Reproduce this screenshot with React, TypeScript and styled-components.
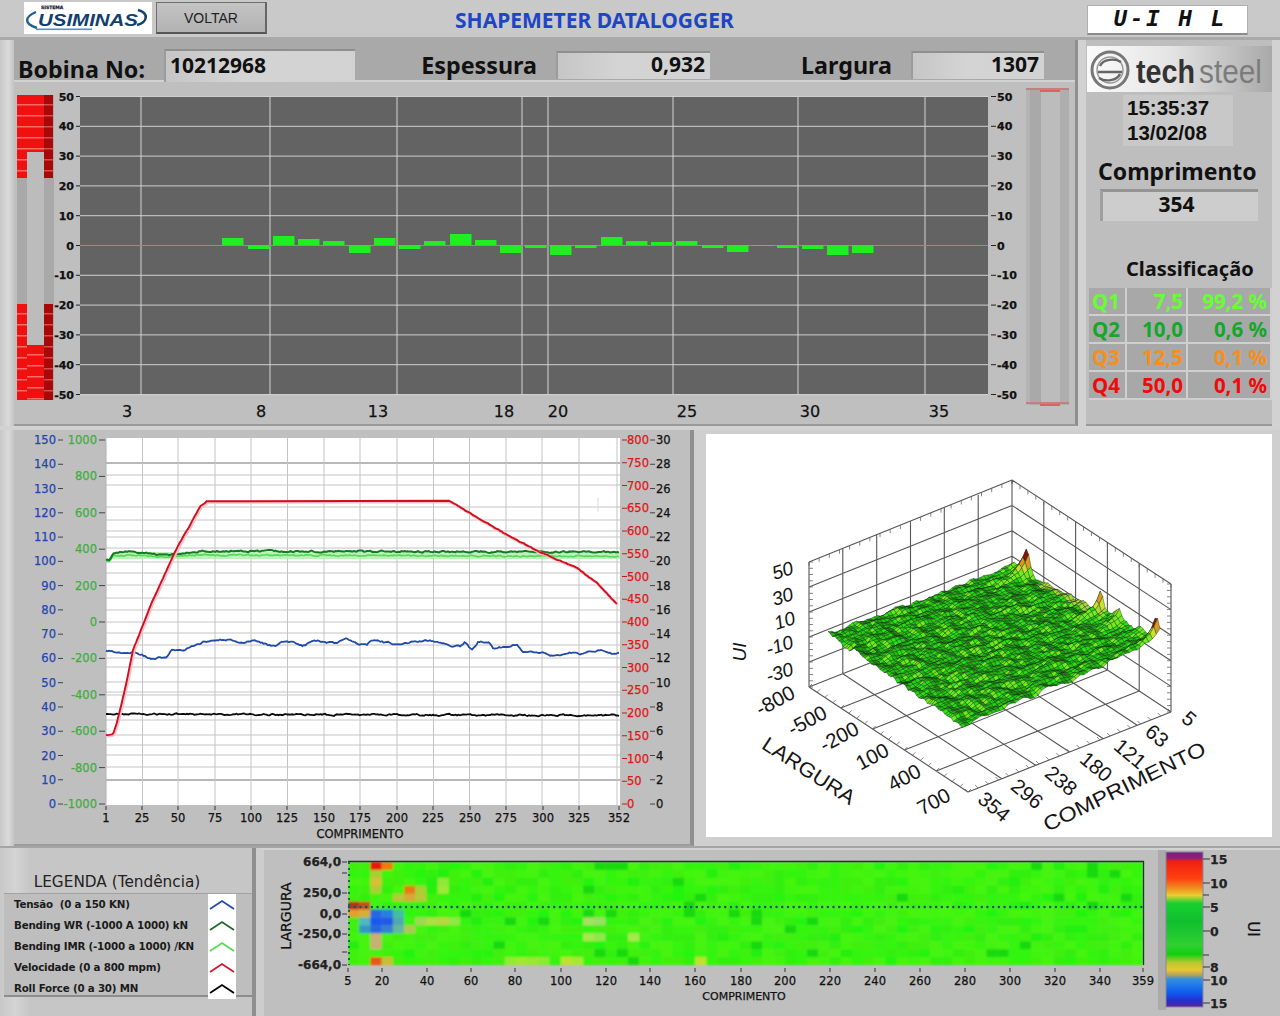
import React from "react";
import styled, { createGlobalStyle } from "styled-components";

const GlobalStyle = createGlobalStyle`
  html, body { margin: 0; padding: 0; background: #c8c8c8; }
  body { font-family: "Noto Sans", "Liberation Sans", sans-serif; }
`;

const TICK_FONT = `"DejaVu Sans", "Liberation Sans", sans-serif`;
const BOLD_FONT = `"Noto Sans", "Liberation Sans", sans-serif`;

/* ---------- deterministic helpers ---------- */
function makeRng(seed: number) {
  let a = seed;
  return () => {
    a |= 0;
    a = (a + 0x6d2b79f5) | 0;
    let t = Math.imul(a ^ (a >>> 15), 1 | a);
    t = (t + Math.imul(t ^ (t >>> 7), 61 | t)) ^ t;
    return ((t ^ (t >>> 14)) >>> 0) / 4294967296;
  };
}
type Pt = [number, number];
function interp(points: Pt[], x: number) {
  for (let i = 1; i < points.length; i++) {
    if (x <= points[i][0]) {
      const [x0, y0] = points[i - 1];
      const [x1, y1] = points[i];
      return y0 + ((y1 - y0) * (x - x0)) / (x1 - x0 || 1);
    }
  }
  return points[points.length - 1][1];
}
function noisyLine(points: Pt[], noise: number, seed: number, step = 1.5) {
  const r = makeRng(seed);
  const start = points[0][0];
  const end = points[points.length - 1][0];
  let d = `M${start} ${points[0][1]}`;
  let drift = 0;
  for (let x = start + step; x <= end; x += step) {
    drift = drift * 0.6 + (r() - 0.5) * noise;
    d += `L${x.toFixed(1)} ${(interp(points, x) + drift).toFixed(1)}`;
  }
  return d;
}

/* ---------- layout ---------- */
const Page = styled.div`
  width: 1280px;
  height: 1016px;
  overflow: hidden;
  background: #c8c8c8;
  display: grid;
  grid-template-rows: 40px 390px 416px 170px;
`;

const HeaderBar = styled.header`
  display: grid;
  grid-template-columns: 128px 111px 812px 161px;
  column-gap: 4px;
  padding: 2px 0 0 24px;
  box-sizing: border-box;
  background: #c9c9c9;
  border-bottom: 3px solid #a9a9a9;
`;
const LogoBox = styled.div`
  height: 32px;
  background: #fff;
`;
const BackButton = styled.button`
  height: 32px;
  width: 111px;
  margin: 0;
  background: linear-gradient(#c4c4c4, #b2b2b2);
  border: 1px solid #6e6e6e;
  border-bottom: 2px solid #555;
  border-right: 2px solid #666;
  color: #222;
  font: 400 14px "Liberation Sans", sans-serif;
`;
const Title = styled.h1`
  margin: 0;
  padding-left: 184px;
  font: 700 21px/36px ${BOLD_FONT};
  color: #1d45c4;
  white-space: nowrap;
`;
const UnitBadge = styled.div`
  height: 30px;
  margin: 3px 0 0 0;
  padding-left: 5px;
  background: #fff;
  border: 1px solid #b0b0b0;
  border-bottom: 2px solid #8c8c8c;
  box-sizing: border-box;
  text-align: center;
  font: italic 700 23px/28px "Liberation Mono", monospace;
  letter-spacing: 2.4px;
  color: #111;
  white-space: pre;
`;

const TopSection = styled.section`
  display: grid;
  grid-template-columns: 14px 1064px 8px 186px 8px;
  grid-template-rows: 386px;
  background: #d2d2d2;
`;
const LeftEdge = styled.div`
  background: linear-gradient(90deg, #c8c8c8, #dadada 60%, #c4c4c4);
`;
const MainPanel = styled.div`
  background: #bfbfbf;
  display: flex;
  flex-direction: column;
  border-right: 3px solid #8f8f8f;
  border-bottom: 2px solid #9a9a9a;
  box-sizing: border-box;
`;
const InfoBar = styled.div`
  height: 42px;
  flex: none;
  box-sizing: border-box;
  padding: 7px 0 0 4px;
  background: #a9a9a9;
  border-bottom: 2px solid #d2d2d2;
  display: grid;
  grid-template-columns: 146px 191px 201px 154px 201px 133px;
  align-items: center;
`;
const Caption = styled.span<{ $right?: boolean; $drop?: number }>`
  font: 700 23.3px/28px ${BOLD_FONT};
  color: #111;
  text-align: ${(p) => (p.$right ? "right" : "left")};
  padding-right: ${(p) => (p.$right ? "19px" : "0")};
  padding-top: ${(p) => p.$drop ?? 0}px;
`;
const ValueField = styled.div<{ $left?: boolean; $h: number }>`
  height: ${(p) => p.$h}px;
  background: linear-gradient(90deg, #c6c6c6, #d4d4d4 40%, #d2d2d2);
  border-top: 2px solid #8f8f8f;
  border-left: 2px solid #9c9c9c;
  box-sizing: border-box;
  font: 700 21px/${(p) => p.$h - 5}px ${BOLD_FONT};
  color: #111;
  text-align: ${(p) => (p.$left ? "left" : "right")};
  padding: 0 5px 0 4px;
`;

const ChartSvg = styled.svg`
  display: block;
  flex: none;
`;
const Tick = styled.text<{ $c?: string; $s?: number; $w?: number }>`
  font-family: ${TICK_FONT};
  font-size: ${(p) => p.$s ?? 11.5}px;
  font-weight: ${(p) => p.$w ?? 400};
  fill: ${(p) => p.$c ?? "#111"};
  stroke: ${(p) => p.$c ?? "#111"};
  stroke-width: 0.25px;
`;

const SidePanel = styled.aside`
  background: #bebebe;
  display: flex;
  flex-direction: column;
  border-bottom: 2px solid #9a9a9a;
  box-sizing: border-box;
`;
const TechLogo = styled.div`
  margin: 6px 0 3px 1px;
  height: 46px;
  flex: none;
  background: linear-gradient(90deg, #fbfbfb, #e4e4e4 45%, #a9a9a9);
`;
const Clock = styled.div`
  width: 110px;
  height: 51px;
  flex: none;
  margin-left: 37px;
  background: #c8c8c8;
  font: 700 20.5px/25px "Liberation Sans", sans-serif;
  color: #111;
  padding-left: 4px;
  box-sizing: border-box;
`;
const SideHeading = styled.h2<{ $gap: number; $size: number; $pad: number }>`
  margin: ${(p) => p.$gap}px 0 0 0;
  padding-left: ${(p) => p.$pad}px;
  font: 700 ${(p) => p.$size}px/30px ${BOLD_FONT};
  color: #111;
  white-space: nowrap;
`;
const LengthValue = styled.div`
  margin: 3px 0 0 14px;
  width: 158px;
  height: 32px;
  box-sizing: border-box;
  background: #cdcdcd;
  border-top: 3px solid #949494;
  border-left: 3px solid #9f9f9f;
  font: 700 21px/25px ${BOLD_FONT};
  text-align: center;
  padding-right: 8px;
  color: #111;
`;
const GradeTable = styled.div`
  margin: 4px 0 0 3px;
  width: 183px;
  display: grid;
  grid-template-columns: 38px 61px 84px;
  grid-auto-rows: 28px;
  background: #d0d0d0;
`;
const GradeCell = styled.div<{ $c: string; $right?: boolean }>`
  background: #a8a8a8;
  border: 1px solid #cfcfcf;
  border-width: 0 2px 2px 0;
  box-sizing: border-box;
  color: ${(p) => p.$c};
  font: 700 20.5px/26px ${BOLD_FONT};
  text-align: ${(p) => (p.$right ? "right" : "left")};
  padding: 0 3px 0 3px;
  white-space: nowrap;
`;

const MiddleSection = styled.section`
  display: grid;
  grid-template-columns: 14px 680px 12px 566px 8px;
  background: #cfcfcf;
`;
const TrendPanel = styled.div`
  background: #bfbfbf;
  border-right: 4px solid #8f8f8f;
  border-bottom: 2px solid #9d9d9d;
  box-sizing: border-box;
`;
const SurfaceCard = styled.div`
  margin: 4px 0 9px;
  background: #fff;
`;

const BottomSection = styled.section`
  display: grid;
  grid-template-columns: 252px 4px 1fr;
  background: #c4c4c4;
  border-top: 2px solid #a5a5a5;
  box-sizing: border-box;
`;
const LegendPanel = styled.div`
  display: flex;
  flex-direction: column;
  background: linear-gradient(90deg, #c8c8c8, #d4d4d4 6%, #c6c6c6 12%);
`;
const LegendTitle = styled.div`
  margin-top: 24px;
  height: 21px;
  text-align: center;
  padding-right: 18px;
  font: 400 15.3px/21px "DejaVu Sans", sans-serif;
  color: #222;
  white-space: nowrap;
`;
const LegendList = styled.div`
  display: grid;
  grid-template-columns: 194px 28px;
  margin-left: 4px;
  height: 104px;
  background: #bebebe;
  border-top: 1px solid #a2a2a2;
  border-bottom: 2px solid #8d8d8d;
  padding-left: 10px;
  box-sizing: border-box;
`;
const LegendNames = styled.div`
  display: grid;
  grid-auto-rows: 21px;
`;
const LegendName = styled.div`
  font: 700 10.3px/21px "DejaVu Sans", sans-serif;
  letter-spacing: -0.2px;
  color: #1b1b1b;
  white-space: pre;
`;
const LegendSwatches = styled.div`
  background: #fff;
  display: grid;
  grid-auto-rows: 21px;
  align-items: center;
  justify-items: center;
`;
const PanelDivider = styled.div`
  background: #8f8f8f;
`;
const HeatPanel = styled.div`
  background: #bfbfbf;
  border-left: 8px solid #cdcdcd;
  border-top: 2px solid #d2d2d2;
  box-sizing: border-box;
`;

/* ---------- logos ---------- */
const UsiminasLogo = () => (
  <ChartSvg width={128} height={32} viewBox="0 0 128 32">
    <path d="M12 10 C0 15 0 22 13 26" fill="none" stroke="#1e5f8f" strokeWidth={2.4} />
    <path d="M114 8 C125 11 124 20 113 23" fill="none" stroke="#17426f" strokeWidth={2.6} />
    <Tick x={17} y={6.5} $s={4.5} $w={700} $c="#223">SISTEMA</Tick>
    <text x={14} y={24} fontFamily="Liberation Sans" fontStyle="italic" fontWeight={700} fontSize={16.5} fill="#12406e" textLength={100} lengthAdjust="spacingAndGlyphs">
      USIMINAS
    </text>
    <rect x={12} y={26.5} width={56} height={1.6} fill="#5d8fb5" />
  </ChartSvg>
);

const TechsteelMark = () => (
  <ChartSvg width={185} height={46} viewBox="0 0 185 46">
    <circle cx={23} cy={24} r={18} fill="none" stroke="#777" strokeWidth={3} />
    <circle cx={23} cy={24} r={13} fill="none" stroke="#999" strokeWidth={1.5} />
    <path d="M11 26H35M34 16C28 12 16 13 13 20M12 32C18 36 30 35 33 28" fill="none" stroke="#666" strokeWidth={2.4} />
    <text x={49} y={37} fontFamily="Liberation Sans" fontWeight={700} fontSize={33} fill="#333" textLength={59} lengthAdjust="spacingAndGlyphs">
      tech
    </text>
    <text x={112} y={37} fontFamily="Liberation Sans" fontSize={33} fill="#7c7c7c" textLength={63} lengthAdjust="spacingAndGlyphs">
      steel
    </text>
  </ChartSvg>
);

/* ---------- top bar chart ---------- */
const BARS: [number, number][] = [
  [222, -7], [248, 4], [273, -9], [298, -6], [323, -4], [349, 8], [374, -7], [399, 4],
  [424, -4], [450, -11], [475, -5], [500, 8], [525, 3], [550, 10], [575, 3], [601, -8],
  [626, -4], [651, -3], [676, -4], [702, 3], [727, 7], [752, 1], [777, 3], [802, 4],
  [827, 10], [852, 8],
];
const TOP_LINES_V = [141, 270, 397, 522, 548, 673, 798, 925];
const TOP_LABELS: [string, number][] = [["3", 127], ["8", 261], ["13", 378], ["18", 504], ["20", 558], ["25", 687], ["30", 810], ["35", 939]];
const TOP_Y = [50, 40, 30, 20, 10, 0, -10, -20, -30, -40, -50];

const RedStack = ({ x, w, y0, y1, dark }: { x: number; w: number; y0: number; y1: number; dark?: boolean }) => {
  const lines: number[] = [];
  for (let y = y0 + 9; y < y1; y += 11) lines.push(y);
  return (
    <g>
      <rect x={x} y={y0} width={w} height={y1 - y0} fill={dark ? "#a80808" : "#f01010"} />
      {lines.map((y) => (
        <rect key={y} x={x} y={y} width={w} height={1.5} fill={dark ? "#d05050" : "#ff6a6a"} />
      ))}
    </g>
  );
};

const TopChart = () => (
  <ChartSvg width={1061} height={342} viewBox="14 82 1061 342">
    {/* left meter */}
    <rect x={17} y={95} width={37} height={305} fill="#a9a9a9" />
    <rect x={27} y={95} width={17} height={305} fill="#bcbcbc" />
    <RedStack x={17} w={10} y0={95} y1={178} />
    <RedStack x={44} w={9} y0={95} y1={178} dark />
    <RedStack x={27} w={17} y0={95} y1={152} />
    <RedStack x={17} w={10} y0={304} y1={400} />
    <RedStack x={44} w={9} y0={304} y1={400} dark />
    <RedStack x={27} w={17} y0={345} y1={400} />
    {/* plot */}
    <rect x={80} y={96} width={908} height={299} fill="#636363" />
    {TOP_Y.map((v, i) => {
      const y = 96.5 + i * 29.8;
      return (
        <g key={v}>
          <line x1={80} x2={988} y1={y} y2={y} stroke="#cfcfcf" strokeWidth={1} />
          <line x1={76} x2={80} y1={y} y2={y} stroke="#222" />
          <line x1={991} x2={996} y1={y} y2={y} stroke="#222" />
          <Tick x={74} y={y + 4} textAnchor="end" $s={11} $w={700}>{v}</Tick>
          <Tick x={997} y={y + 4} $s={11} $w={700}>{v}</Tick>
        </g>
      );
    })}
    {TOP_LINES_V.map((x) => (
      <line key={x} x1={x} x2={x} y1={96} y2={395} stroke="#d4d4d4" strokeWidth={1} />
    ))}
    <line x1={80} x2={988} y1={245.5} y2={245.5} stroke="#48c048" />
    {BARS.map(([x, h]) => (
      <rect key={x} x={x} y={h < 0 ? 245 + h : 245} width={21.5} height={Math.abs(h)} fill="#20ee20" />
    ))}
    {TOP_LABELS.map(([t, x]) => (
      <Tick key={t} x={x} y={417} textAnchor="middle" $s={16}>{t}</Tick>
    ))}
    {/* right meter */}
    <rect x={1026} y={88} width={43} height={317} fill="#b4b4b4" />
    <rect x={1030} y={88} width={11} height={317} fill="#a9a9a9" />
    <rect x={1041} y={88} width={19} height={317} fill="#bcbcbc" />
    <rect x={1060} y={88} width={9} height={317} fill="#aeaeae" />
    <rect x={1026} y={88} width={43} height={2} fill="#c48080" />
    <rect x={1040} y={90} width={20} height={2} fill="#e06060" />
    <rect x={1026} y={402} width={43} height={2} fill="#c48080" />
    <rect x={1040} y={404} width={20} height={2} fill="#e06060" />
  </ChartSvg>
);

/* ---------- trend chart ---------- */
const TREND_H = [463, 475, 485, 507, 520, 531, 537, 548, 562, 573, 585, 598, 610, 622, 633, 645, 658, 667, 682, 692, 695, 707, 720, 735, 745, 755, 767, 780];
const TREND_V = [142.5, 178, 215, 251, 287.5, 324, 360, 397, 433.5, 469.5, 506, 542, 579, 617];
const TREND_X: [string, number][] = [["1", 106], ["25", 142], ["50", 178], ["75", 215], ["100", 251], ["125", 287], ["150", 324], ["175", 360], ["200", 397], ["225", 433], ["250", 470], ["275", 506], ["300", 543], ["325", 579], ["352", 619]];

const BLUE_Z: Pt[] = [
  [318, 662], [370, 672], [400, 665], [460, 688], [500, 680], [515, 660], [550, 660], [590, 640], [640, 632], [670, 628], [730, 635], [760, 630], [820, 650], [860, 632], [910, 647], [940, 632], [1000, 640], [1040, 628],
  [1050, 635], [1100, 645], [1120, 630], [1180, 642], [1250, 635], [1290, 630], [1350, 645], [1380, 650], [1395, 635], [1415, 660], [1435, 635], [1465, 635], [1480, 657], [1530, 645], [1550, 645], [1570, 665], [1630, 670], [1650, 680], [1710, 665], [1740, 672], [1800, 660], [1840, 672], [1860, 670],
];
const BLUE = BLUE_Z.map(([x, y]) => [x / 3, 430 + y / 3] as Pt);
const RED_RISE: Pt[] = [[106, 735], [113, 735], [117, 723], [127, 680], [133, 650], [153, 600], [177, 548], [200, 507], [207, 500.7]];
const RED_FALL: Pt[] = [[449, 500.7], [473, 515], [507, 535], [540, 552], [577, 568], [597, 583], [618, 605]];
const redPath = `${noisyLine(RED_RISE, 0.8, 13)}L449 500.7${noisyLine(RED_FALL, 0.8, 17).replace("M", "L")}`;
const GREEN_D: Pt[] = [[106, 560], [110, 560], [113, 553], [130, 551], [160, 555], [178, 554], [200, 551], [620, 552]];
const GREEN_L: Pt[] = [[106, 561], [110, 561], [113, 556], [130, 555], [160, 557], [178, 556], [200, 555], [620, 556.5]];
const BLACK: Pt[] = [[106, 714], [620, 715.5]];

const TrendChart = () => (
  <ChartSvg width={676} height={414} viewBox="14 430 676 414">
    <rect x={106} y={438} width={514} height={367} fill="#fff" />
    {TREND_H.map((y, i) => (
      <line key={i} x1={106} x2={620} y1={y} y2={y} stroke={y === 463 || y === 780 ? "#b8b8b8" : "#c4c4c4"} strokeWidth={y === 463 || y === 780 ? 2 : 1} />
    ))}
    {TREND_V.map((x) => (
      <line key={x} x1={x} x2={x} y1={438} y2={805} stroke="#c4c4c4" />
    ))}
    <line x1={106} x2={106} y1={438} y2={805} stroke="#b0b0b0" />
    <line x1={598} x2={598} y1={498} y2={512} stroke="#dadada" />
    {Array.from({ length: 16 }, (_, i) => {
      const y = 440 + i * 24.27;
      return (
        <g key={i}>
          <line x1={58} x2={63} y1={y} y2={y} stroke="#444" />
          <Tick x={56} y={y + 4} textAnchor="end" $c="#2445b0">{150 - i * 10}</Tick>
          <line x1={650} x2={655} y1={y} y2={y} stroke="#444" />
          <Tick x={656} y={y + 4}>{30 - i * 2}</Tick>
        </g>
      );
    })}
    {Array.from({ length: 11 }, (_, i) => {
      const y = 440 + i * 36.4;
      return (
        <g key={i}>
          <line x1={99} x2={105} y1={y} y2={y} stroke="#444" />
          <Tick x={97} y={y + 4} textAnchor="end" $c="#3fae3f">{1000 - i * 200}</Tick>
        </g>
      );
    })}
    {Array.from({ length: 17 }, (_, i) => {
      const y = 440 + i * 22.75;
      return (
        <g key={i}>
          <line x1={622} x2={627} y1={y} y2={y} stroke="#d01515" />
          <Tick x={627} y={y + 4} $c="#e01515">{800 - i * 50}</Tick>
        </g>
      );
    })}
    {TREND_X.map(([t, x]) => (
      <g key={t}>
        <line x1={x} x2={x} y1={806} y2={810} stroke="#333" />
        <Tick x={x} y={822} textAnchor="middle">{t}</Tick>
      </g>
    ))}
    <Tick x={360} y={838} textAnchor="middle" $s={11.5}>COMPRIMENTO</Tick>
    <path d="M113 552H620V559H113Z" fill="#a8f0a8" opacity={0.8} />
    <path d={noisyLine(BLUE, 1.6, 3)} fill="none" stroke="#1f4aa8" strokeWidth={1.8} />
    <path d={noisyLine(GREEN_L, 1.2, 5)} fill="none" stroke="#5ad85a" strokeWidth={1.7} />
    <path d={noisyLine(GREEN_D, 1.4, 9)} fill="none" stroke="#127a20" strokeWidth={2} />
    <path d={noisyLine(BLACK, 1.4, 11)} fill="none" stroke="#0a0a0a" strokeWidth={1.8} />
    <path d={redPath} fill="none" stroke="#ffc0c8" strokeWidth={3} transform="translate(1 1)" />
    <path d={redPath} fill="none" stroke="#cc1020" strokeWidth={1.9} />
  </ChartSvg>
);

/* ---------- 3D surface ---------- */
const lerpPt = (a: Pt, b: Pt, t: number): Pt => [a[0] + (b[0] - a[0]) * t, a[1] + (b[1] - a[1]) * t];

const WALL = {
  topB: [1012, 480] as Pt, topL: [809, 562] as Pt, topR: [1171, 584] as Pt,
  botB: [1012, 607] as Pt, botL: [809, 687] as Pt, botR: [1171, 712] as Pt, botF: [968, 792] as Pt,
};

function buildGridLines(): string {
  const { topB, topL, topR, botB, botL, botR, botF } = WALL;
  let d = "";
  const seg = (a: Pt, b: Pt) => { d += `M${a[0].toFixed(1)} ${a[1].toFixed(1)}L${b[0].toFixed(1)} ${b[1].toFixed(1)}`; };
  for (let i = 0; i <= 6; i++) {
    const t = i / 6;
    seg(lerpPt(topL, topB, t), lerpPt(botL, botB, t));
    seg(lerpPt(botL, botB, t), lerpPt(botF, botR, t));
  }
  for (let i = 0; i <= 5; i++) {
    const t = i / 5;
    seg(lerpPt(topB, topR, t), lerpPt(botB, botR, t));
    seg(lerpPt(botL, botF, t), lerpPt(botB, botR, t));
    seg(lerpPt(topL, botL, t), lerpPt(topB, botB, t));
    seg(lerpPt(topB, botB, t), lerpPt(topR, botR, t));
  }
  return d;
}

function buildTicks(): string {
  const { topB, topL, topR, botL, botR, botF } = WALL;
  let d = "";
  const r: [Pt, Pt, number, number][] = [
    [topL, topB, 0, 4], [topB, topR, 0, 4], [botL, botF, 3, -3], [botF, botR, -3, -3], [botL, topL, 4, 0], [botR, topR, -4, 0],
  ];
  r.forEach(([a, b, dx, dy]) => {
    const n = 20;
    for (let i = 0; i <= n; i++) {
      const p = lerpPt(a, b, i / n);
      d += `M${p[0].toFixed(1)} ${p[1].toFixed(1)}l${dx} ${dy}`;
    }
  });
  return d;
}

function smooth(grid: number[][], times: number) {
  let g = grid;
  for (let t = 0; t < times; t++) {
    g = g.map((row, i) =>
      row.map((v, j) => {
        const a = g[Math.max(i - 1, 0)][j];
        const b = g[Math.min(i + 1, g.length - 1)][j];
        const c = g[i][Math.max(j - 1, 0)];
        const e = g[i][Math.min(j + 1, row.length - 1)];
        return (v * 2 + a + b + c * 1.6 + e * 1.6) / 7.2;
      })
    );
  }
  return g;
}

function buildSurface() {
  const B: Pt = [1012, 566], L: Pt = [828, 633], R: Pt = [1160, 641], F: Pt = [962, 726];
  const NU = 62, NV = 52;
  const r = makeRng(42);
  const grid: number[][] = [];
  for (let i = 0; i <= NU; i++) {
    const row: number[] = [];
    for (let j = 0; j <= NV; j++) row.push(r() - 0.5);
    grid.push(row);
  }
  const soft = smooth(grid, 2);
  const peaks: [number, number][] = [[0.1, 24], [0.6, 20], [0.72, 11], [0.98, 24], [0.87, 6], [0.03, 5]];
  const h: number[][] = soft.map((row, i) =>
    row.map((v, j) => {
      const u = i / NU, w = j / NV;
      let z = v * 9.5 + grid[i][j] * 1.3;
      peaks.forEach(([p, a]) => {
        const dist = (u - p) * 34;
        z += a * Math.exp(-dist * dist) * Math.exp(-w * 22);
      });
      return z;
    })
  );
  const pos = (i: number, j: number): Pt => {
    const u = i / NU, w = j / NV;
    const a = lerpPt(B, R, u);
    const b = lerpPt(L, F, u);
    const p = lerpPt(a, b, w);
    return [p[0], p[1] - h[i][j]];
  };
  const quads: { d: string; fill: string }[] = [];
  for (let j = 0; j < NV; j++) {
    for (let i = 0; i < NU; i++) {
      const ps = [pos(i, j), pos(i + 1, j), pos(i + 1, j + 1), pos(i, j + 1)];
      const avg = (h[i][j] + h[i + 1][j] + h[i + 1][j + 1] + h[i][j + 1]) / 4;
      const slope = h[i][j] - h[i + 1][j + 1] + (h[i + 1][j] - h[i][j + 1]) * 0.4;
      let fill: string;
      if (avg > 16) fill = "#8a1408";
      else if (avg > 11) fill = "#d89a20";
      else if (avg > 7.5) fill = "#cce030";
      else if (j < 2 && i > 12 && i < 40) fill = "#a8d838";
      else {
        const l = 39 + slope * 6;
        const hue = slope > 1.8 ? 96 : 114;
        fill = `hsl(${hue}, 85%, ${Math.max(30, Math.min(52, l)).toFixed(0)}%)`;
      }
      quads.push({
        d: `M${ps.map((q) => `${q[0].toFixed(1)} ${q[1].toFixed(1)}`).join("L")}Z`,
        fill,
      });
    }
  }
  return quads;
}
const SURFACE_QUADS = buildSurface();
const GRID_D = buildGridLines();
const TICKS_D = buildTicks();

const FLOOR_LABELS: [string, number, number, number, number?][] = [
  ["-800", 776, 702, -28], ["-500", 808, 722, -28], ["-200", 840, 738, -28], ["100", 873, 758, -28], ["400", 905, 779, -28], ["700", 934.5, 803, -28],
  ["354", 993, 808, 40], ["296", 1026, 795, 40], ["238", 1060, 782, 40], ["180", 1095, 768, 40], ["121", 1129, 755, 40], ["63", 1156, 737, 40], ["5", 1188, 720, 40],
  ["LARGURA", 808, 772, 33, 106], ["COMPRIMENTO", 1125, 788, -26, 178],
];
const WALL_LABELS: [string, number, number][] = [
  ["50", 783, 572], ["30", 783, 598], ["10", 785, 622], ["-10", 780, 647], ["-30", 780, 674],
];

const Iso = styled.text<{ $italic?: boolean }>`
  font-family: "Liberation Sans", sans-serif;
  font-style: ${(p) => (p.$italic ? "italic" : "normal")};
  font-size: ${(p) => (p.$italic ? 19 : 20.5)}px;
  fill: #151515;
`;

const SurfaceChart = () => (
  <ChartSvg width={566} height={403} viewBox="706 434 566 403">
    <path d={GRID_D} stroke="#555" strokeWidth={1.1} fill="none" />
    <path d={TICKS_D} stroke="#666" strokeWidth={0.8} fill="none" />
    {SURFACE_QUADS.map((q, i) => (
      <path key={i} d={q.d} fill={q.fill} stroke="#082208" strokeWidth={0.5} strokeOpacity={0.75} />
    ))}
    {FLOOR_LABELS.map(([t, x, y, a, len]) => (
      <Iso key={t} x={x} y={y} textAnchor="middle" dominantBaseline="middle" textLength={len} lengthAdjust={len ? "spacingAndGlyphs" : undefined} transform={`rotate(${a} ${x} ${y})`}>{t}</Iso>
    ))}
    {WALL_LABELS.map(([t, x, y]) => (
      <Iso key={t} $italic x={x} y={y} textAnchor="middle" dominantBaseline="middle" transform={`rotate(-18 ${x} ${y})`}>{t}</Iso>
    ))}
    <Iso $italic x={741} y={652} textAnchor="middle" dominantBaseline="middle" transform="rotate(-90 741 652)">UI</Iso>
  </ChartSvg>
);

/* ---------- heat map ---------- */
const HEAT_COLS = 71;
const HEAT_ROWS = 13;
const HOT: Record<string, string> = {
  "2,0": "#e81808", "3,0": "#f07a10", "2,1": "#a8d030", "2,2": "#d8c030", "2,3": "#a8d030",
  "5,3": "#e87a18", "6,3": "#a8d030", "4,4": "#b8c838", "5,4": "#d8a838", "6,4": "#b8c838", "8,2": "#90e838", "8,3": "#a0e838",
  "0,5": "#b83018", "1,5": "#c85018", "0,6": "#e0a030", "1,6": "#d8b030", "2,6": "#2868e0", "3,6": "#2880e0", "4,6": "#40c0a0",
  "1,7": "#50b8c0", "2,7": "#1858f0", "3,7": "#2058e8", "4,7": "#50a8b0", "1,8": "#3098c0", "2,8": "#2068e0", "3,8": "#3080d0", "4,8": "#60b8a0", "5,8": "#b0c850",
  "2,9": "#c8b070", "2,10": "#c8b070", "2,12": "#e85818", "3,12": "#c8c030",
  "6,7": "#a0d850", "7,7": "#b0e040", "8,7": "#b8d840", "9,7": "#90e840",
  "21,7": "#a8e060", "22,7": "#98e060", "21,9": "#a8e848", "22,9": "#90e848", "25,9": "#a8e848",
  "14,12": "#90ec30", "15,12": "#a0e830", "16,12": "#98e830", "17,12": "#88ec30",
  "19,12": "#c0e030", "20,12": "#a8e830", "31,12": "#c0e030",
};

function buildHeat() {
  const r = makeRng(77);
  const cells: { x: number; y: number; fill: string }[] = [];
  for (let i = 0; i < HEAT_COLS; i++) {
    for (let j = 0; j < HEAT_ROWS; j++) {
      const v = r();
      const light = 50 + (r() - 0.5) * 3;
      const hue = v > 0.9 ? 114 : v > 0.5 ? 110 : 106;
      const spot = i > 8 && v > 0.965 ? "hsl(116,90%,45%)" : null;
      const fill = HOT[`${i},${j}`] ?? spot ?? `hsl(${hue},92%,${light.toFixed(0)}%)`;
      cells.push({ x: 348 + (i * 795) / HEAT_COLS, y: 862 + (j * 103) / HEAT_ROWS, fill });
    }
  }
  return cells;
}
const HEAT_CELLS = buildHeat();
const HEAT_X: [string, number][] = [["5", 348], ["20", 382], ["40", 427], ["60", 471], ["80", 515], ["100", 561], ["120", 606], ["140", 650], ["160", 695], ["180", 741], ["200", 785], ["220", 830], ["240", 875], ["260", 920], ["280", 965], ["300", 1010], ["320", 1055], ["340", 1100], ["359", 1143]];
const HEAT_Y: [string, number][] = [["664,0", 862], ["250,0", 893], ["0,0", 914], ["-250,0", 934], ["-664,0", 965]];
const BAR_LABELS: [string, number][] = [["15", 859], ["10", 883], ["5", 907], ["0", 931], ["8", 967], ["10", 980], ["15", 1003]];

const HeatChart = () => (
  <ChartSvg width={1016} height={166} viewBox="264 850 1016 166">
    <defs>
      <linearGradient id="scale" x1="0" x2="0" y1="0" y2="1">
        <stop offset="0" stopColor="#7a2080" />
        <stop offset="0.04" stopColor="#90207a" />
        <stop offset="0.06" stopColor="#f02010" />
        <stop offset="0.17" stopColor="#ff4010" />
        <stop offset="0.23" stopColor="#f08820" />
        <stop offset="0.28" stopColor="#e8d030" />
        <stop offset="0.33" stopColor="#18d030" />
        <stop offset="0.45" stopColor="#10bf30" />
        <stop offset="0.6" stopColor="#30d030" />
        <stop offset="0.66" stopColor="#10d010" />
        <stop offset="0.71" stopColor="#b0c830" />
        <stop offset="0.76" stopColor="#e8c830" />
        <stop offset="0.795" stopColor="#b0a060" />
        <stop offset="0.82" stopColor="#3090e0" />
        <stop offset="0.9" stopColor="#1060f0" />
        <stop offset="0.96" stopColor="#2030d0" />
        <stop offset="1" stopColor="#602090" />
      </linearGradient>
      <filter id="soft" x="0" y="0" width="100%" height="100%">
        <feGaussianBlur stdDeviation="0.9" />
      </filter>
    </defs>
    <rect x={1158} y={850} width={8} height={160} fill="#ababab" />
    <g filter="url(#soft)">
      {HEAT_CELLS.map((c, i) => (
        <rect key={i} x={c.x} y={c.y} width={11.4} height={8.2} fill={c.fill} />
      ))}
    </g>
    <path d="M348 861.5H1143.5V965" fill="none" stroke="#163a16" strokeWidth={1.3} />
    <line x1={349} x2={349} y1={862} y2={965} stroke="#0f6a50" strokeWidth={2} strokeDasharray="2 4" />
    <line x1={349} x2={1143} y1={907} y2={907} stroke="#17507a" strokeWidth={2.4} strokeLinecap="round" strokeDasharray="0.1 5.6" />
    {HEAT_X.map(([t, x]) => (
      <g key={t}>
        <line x1={x} x2={x} y1={968} y2={972} stroke="#333" />
        <Tick x={x} y={985} textAnchor="middle" $s={11.5}>{t}</Tick>
      </g>
    ))}
    <Tick x={744} y={1000} textAnchor="middle" $s={11}>COMPRIMENTO</Tick>
    {HEAT_Y.map(([t, y]) => (
      <g key={t}>
        <line x1={342} x2={347} y1={y} y2={y} stroke="#333" />
        <Tick x={341} y={y + 4} textAnchor="end" $s={12} $w={700} $c="#222">{t}</Tick>
      </g>
    ))}
    <line x1={342} x2={347} y1={873} y2={873} stroke="#333" />
    <line x1={342} x2={347} y1={952} y2={952} stroke="#333" />
    <Tick x={291} y={916} textAnchor="middle" $s={14} transform="rotate(-90 291 916)">LARGURA</Tick>
    <rect x={1166} y={852} width={37} height={155} fill="url(#scale)" stroke="#8a8aa0" strokeWidth={1} />
    {BAR_LABELS.map(([t, y], i) => (
      <g key={i}>
        <line x1={1203} x2={1210} y1={y} y2={y} stroke="#333" />
        <Tick x={1210} y={y + 4.5} $s={12.5} $w={700} $c="#222">{t}</Tick>
      </g>
    ))}
    <line x1={1203} x2={1209} y1={895} y2={895} stroke="#333" />
    <line x1={1203} x2={1209} y1={955} y2={955} stroke="#333" />
    <Tick x={1248} y={929} textAnchor="middle" $s={15} transform="rotate(90 1248 929)">UI</Tick>
  </ChartSvg>
);

/* ---------- data ---------- */
const GRADES = [
  { c: "#66ff33", q: "Q1", a: "7,5", b: "99,2 %" },
  { c: "#12a82a", q: "Q2", a: "10,0", b: "0,6 %" },
  { c: "#f59020", q: "Q3", a: "12,5", b: "0,1 %" },
  { c: "#f00a0a", q: "Q4", a: "50,0", b: "0,1 %" },
];
const LEGEND = [
  { name: "Tensão  (0 a 150 KN)", c: "#1f4aa8" },
  { name: "Bending WR (-1000 A 1000) kN", c: "#1d6a2a" },
  { name: "Bending IMR (-1000 a 1000) /KN", c: "#58d858" },
  { name: "Velocidade (0 a 800 mpm)", c: "#d01830" },
  { name: "Roll Force (0 a 30) MN", c: "#000" },
];

const Chevron = ({ c }: { c: string }) => (
  <ChartSvg width={26} height={12} viewBox="0 0 26 12">
    <polyline points="1,10 13,2 25,10" fill="none" stroke={c} strokeWidth={1.8} />
  </ChartSvg>
);

export default function App() {
  return (
    <Page>
      <GlobalStyle />
      <HeaderBar>
        <LogoBox><UsiminasLogo /></LogoBox>
        <BackButton>VOLTAR</BackButton>
        <Title>SHAPEMETER DATALOGGER</Title>
        <UnitBadge>U-I H L</UnitBadge>
      </HeaderBar>

      <TopSection>
        <LeftEdge />
        <MainPanel>
          <InfoBar>
            <Caption $drop={8}>Bobina No:</Caption>
            <ValueField $left $h={33}>10212968</ValueField>
            <Caption $right>Espessura</Caption>
            <ValueField $h={28}>0,932</ValueField>
            <Caption $right>Largura</Caption>
            <ValueField $h={28}>1307</ValueField>
          </InfoBar>
          <TopChart />
        </MainPanel>
        <div />
        <SidePanel>
          <TechLogo><TechsteelMark /></TechLogo>
          <Clock>15:35:37<br />13/02/08</Clock>
          <SideHeading $gap={10} $size={23} $pad={12}>Comprimento</SideHeading>
          <LengthValue>354</LengthValue>
          <SideHeading $gap={33} $size={20} $pad={40}>Classificação</SideHeading>
          <GradeTable>
            {GRADES.map((g) => (
              <React.Fragment key={g.q}>
                <GradeCell $c={g.c}>{g.q}</GradeCell>
                <GradeCell $c={g.c} $right>{g.a}</GradeCell>
                <GradeCell $c={g.c} $right>{g.b}</GradeCell>
              </React.Fragment>
            ))}
          </GradeTable>
        </SidePanel>
        <div />
      </TopSection>

      <MiddleSection>
        <LeftEdge />
        <TrendPanel><TrendChart /></TrendPanel>
        <div />
        <SurfaceCard><SurfaceChart /></SurfaceCard>
        <div />
      </MiddleSection>

      <BottomSection>
        <LegendPanel>
          <LegendTitle>LEGENDA (Tendência)</LegendTitle>
          <LegendList>
            <LegendNames>
              {LEGEND.map((l) => <LegendName key={l.name}>{l.name}</LegendName>)}
            </LegendNames>
            <LegendSwatches>
              {LEGEND.map((l) => <Chevron key={l.name} c={l.c} />)}
            </LegendSwatches>
          </LegendList>
        </LegendPanel>
        <PanelDivider />
        <HeatPanel><HeatChart /></HeatPanel>
      </BottomSection>
    </Page>
  );
}
